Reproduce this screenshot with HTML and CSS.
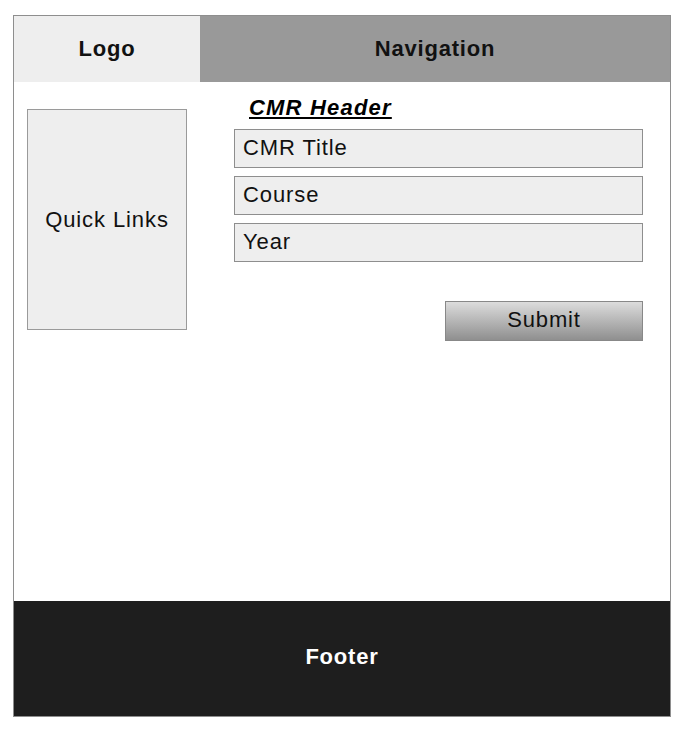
FILE: index.html
```html
<!DOCTYPE html>
<html>
<head>
<meta charset="utf-8">
<link rel="stylesheet" href="styles.css">
</head>
<body>
<div class="frame">
  <header class="top">
    <div class="logo">Logo</div>
    <nav class="nav">Navigation</nav>
  </header>
  <main class="main">
    <aside class="quick">Quick Links</aside>
    <section class="form">
      <h1 class="form-title">CMR Header</h1>
      <div class="field">CMR Title</div>
      <div class="field">Course</div>
      <div class="field">Year</div>
      <div class="actions"><div class="submit">Submit</div></div>
    </section>
  </main>
  <footer class="footer">Footer</footer>
</div>
</body>
</html>
```
FILE: styles.css
```css
* { box-sizing: border-box; }
html, body { margin: 0; padding: 0; background: #fff; }
body {
  font-family: "Liberation Sans", Arial, sans-serif;
  color: #111;
  padding: 15px 0 0 13px;
}
.frame {
  width: 658px;
  height: 702px;
  border: 1px solid #8e8e8e;
  display: flex;
  flex-direction: column;
}
.top {
  display: flex;
  height: 66px;
  flex: none;
}
.logo {
  width: 186px;
  background: #eeeeee;
  display: flex;
  align-items: center;
  justify-content: center;
  font-weight: bold;
  font-size: 22px;
  letter-spacing: 0.8px;
}
.nav {
  flex: 1;
  background: #999999;
  display: flex;
  align-items: center;
  justify-content: center;
  font-weight: bold;
  font-size: 22px;
  letter-spacing: 0.8px;
}
.main {
  flex: 1;
  display: flex;
  align-items: flex-start;
  padding: 0 27px 0 13px;
}
.quick {
  width: 160px;
  height: 221px;
  margin-top: 27px;
  background: #eeeeee;
  border: 1px solid #9a9a9a;
  display: flex;
  align-items: center;
  justify-content: center;
  font-size: 22px;
  letter-spacing: 0.9px;
}
.form {
  margin-left: 47px;
  width: 409px;
  padding-top: 14px;
  display: flex;
  flex-direction: column;
  gap: 8px;
}
.form-title {
  margin: 0 0 2px 15px;
  font-size: 22px;
  line-height: 23px;
  font-weight: bold;
  font-style: italic;
  text-decoration: underline;
  letter-spacing: 1.2px;
  color: #000;
}
.field {
  height: 39px;
  background: #eeeeee;
  border: 1px solid #8e8e8e;
  padding: 6px 8px 0;
  font-size: 22px;
  line-height: 24px;
  letter-spacing: 0.9px;
}
.actions {
  display: flex;
  justify-content: flex-end;
  margin-top: 31px;
}
.submit {
  width: 198px;
  height: 40px;
  border: 1px solid #888;
  background: linear-gradient(#dcdcdc, #8f8f8f);
  display: flex;
  align-items: center;
  justify-content: center;
  padding-bottom: 2px;
  font-size: 22px;
  letter-spacing: 0.8px;
}
.footer {
  height: 115px;
  flex: none;
  background: #1e1e1e;
  color: #fff;
  display: flex;
  align-items: center;
  justify-content: center;
  font-weight: bold;
  font-size: 22px;
  letter-spacing: 0.8px;
  padding-bottom: 4px;
}
```
